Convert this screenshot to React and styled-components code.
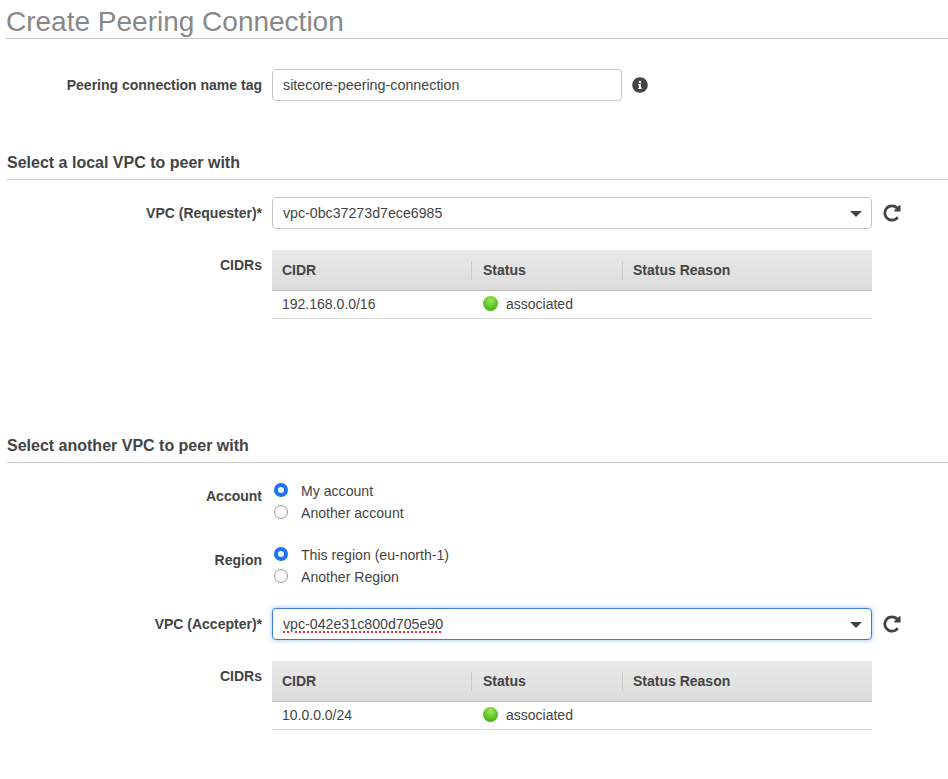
import React from 'react';
import styled, { createGlobalStyle } from 'styled-components';
import { FaInfoCircle } from 'react-icons/fa';

const GlobalStyle = createGlobalStyle`
  html, body {
    margin: 0;
    padding: 0;
    background: #fff;
    overflow: hidden;
  }
  body {
    font-family: "Liberation Sans", Arial, sans-serif;
    font-size: 14px;
    color: #444;
  }
`;

const Page = styled.div`
  width: 948px;
  height: 779px;
  padding-left: 6px;
  box-sizing: border-box;
  overflow: hidden;
`;

const Title = styled.h1`
  margin: 0;
  height: 38px;
  line-height: 44px;
  font-size: 28px;
  font-weight: 400;
  color: #888;
  border-bottom: 1px solid #c6c6c6;
`;

const Section = styled.section`
  margin-top: ${(p) => p.$top}px;
`;

const Heading = styled.h2`
  margin: 0 0 17px 1px;
  height: 27px;
  line-height: 21px;
  font-size: 16px;
  font-weight: 700;
  color: #444;
  border-bottom: 1px solid #c6c6c6;
`;

const Row = styled.div`
  display: flex;
  align-items: ${(p) => (p.$top ? 'flex-start' : 'center')};
  margin-top: ${(p) => p.$mt || 0}px;
`;

const Label = styled.label`
  flex: 0 0 256px;
  margin-right: 10px;
  text-align: right;
  font-weight: 700;
  font-size: 14px;
  color: #444;
  padding-top: ${(p) => p.$pt || 0}px;
`;

const TextInput = styled.input`
  width: 350px;
  height: 32px;
  box-sizing: border-box;
  padding: 0 10px;
  border: 1px solid #c6c6c6;
  border-radius: 4px;
  font: inherit;
  font-size: 14.3px;
  color: #444;
  outline: none;
`;

const SelectBox = styled.div`
  position: relative;
  width: 600px;
  height: 32px;
  box-sizing: border-box;
  padding: 0 10px;
  line-height: 30px;
  background: #fff;
  border: 1px solid ${(p) => (p.$focused ? '#3b7fd4' : '#c6c6c6')};
  border-radius: 4px;
  box-shadow: ${(p) => (p.$focused ? '0 0 5px rgba(82, 150, 236, 0.6)' : 'none')};
  font-size: 14.2px;
  color: #444;
`;

const Caret = styled.span`
  position: absolute;
  right: 9px;
  top: 13px;
  width: 0;
  height: 0;
  border-left: 6px solid transparent;
  border-right: 6px solid transparent;
  border-top: 6px solid #444;
`;

const Misspelled = styled.span`
  text-decoration: underline dotted #e8302a 1.5px;
  text-underline-offset: 2px;
`;

const IconSlot = styled.span`
  display: inline-flex;
  margin-left: ${(p) => p.$ml}px;
  font-size: ${(p) => p.$size}px;
  color: #444;
`;

const Table = styled.div`
  width: 600px;
  font-size: 14px;
`;

const TableHead = styled.div`
  display: grid;
  grid-template-columns: 199px 151px 250px;
  height: 41px;
  align-items: center;
  background: linear-gradient(#e9e9e9, #dcdcdc);
  border-bottom: 1px solid #bdbdbd;
  box-sizing: border-box;
`;

const HeadCell = styled.div`
  height: 19px;
  line-height: 19px;
  padding-left: ${(p) => p.$pad}px;
  font-weight: 700;
  color: #444;
  border-left: ${(p) => (p.$first ? 'none' : '1px solid #c9c9c9')};
`;

const TableRow = styled.div`
  display: grid;
  grid-template-columns: 200px 150px 250px;
  height: 28px;
  padding-bottom: 2px;
  align-items: center;
  border-bottom: 1px solid #d9d9d9;
  box-sizing: border-box;
`;

const Cell = styled.div`
  display: flex;
  align-items: center;
  padding-left: ${(p) => (p.$first ? 10 : 11)}px;
  color: #444;
`;

const Dot = styled.span`
  width: 15px;
  height: 15px;
  margin-right: 8px;
  border-radius: 50%;
  background: radial-gradient(circle at 50% 30%, #9be85a, #55c020 60%, #3f9a14);
`;

const RadioGroup = styled.div`
  display: flex;
  flex-direction: column;
`;

const RadioLine = styled.label`
  display: flex;
  align-items: center;
  height: 22px;
  font-size: 14.1px;
  color: #444;
`;

const Radio = styled.input.attrs({ type: 'radio' })`
  appearance: none;
  width: 14px;
  height: 14px;
  margin: 0 13px 2px 2px;
  box-sizing: border-box;
  border-radius: 50%;
  background: #fff;
  border: 1px solid #9a9a9a;
  &:checked {
    border: 4px solid #1a73f0;
  }
`;

const RefreshIcon = styled.svg`
  width: 20px;
  height: 20px;
  margin-left: 10px;
  fill: #444;
`;

const CidrTable = ({ cidr }) => (
  <Row $top $mt={21}>
    <Label $pt={7}>CIDRs</Label>
    <Table>
      <TableHead>
        <HeadCell $first $pad={10}>CIDR</HeadCell>
        <HeadCell $pad={11}>Status</HeadCell>
        <HeadCell $pad={10}>Status Reason</HeadCell>
      </TableHead>
      <TableRow>
        <Cell $first>{cidr}</Cell>
        <Cell>
          <Dot />
          associated
        </Cell>
        <Cell />
      </TableRow>
    </Table>
  </Row>
);

const Refresh = () => (
  <RefreshIcon viewBox="0 0 1792 1792">
    <path d="M1664 256v448q0 26-19 45t-45 19h-448q-42 0-59-40-17-39 14-69l138-138q-148-137-349-137-104 0-198.5 40.500t-163.500 109.500-109.500 163.500-40.500 198.500 40.500 198.500 109.500 163.500 163.500 109.500 198.500 40.500q119 0 225-52t179-147q7-10 23-12 15 0 25 9l137 138q9 8 9.500 20.500t-7.500 22.500q-109 132-264 204.500t-327 72.500q-156 0-298-61t-245-164-164-245-61-298 61-298 164-245 245-164 298-61q147 0 284.500 55.500t244.500 156.500l130-129q29-31 70-14 39 17 39 59z" />
  </RefreshIcon>
);

export default function App() {
  return (
    <Page>
      <GlobalStyle />
      <Title>Create Peering Connection</Title>

      <Row $mt={30}>
        <Label>Peering connection name tag</Label>
        <TextInput readOnly value="sitecore-peering-connection" />
        <IconSlot $ml={10} $size={16}>
          <FaInfoCircle />
        </IconSlot>
      </Row>

      <Section $top={51}>
        <Heading>Select a local VPC to peer with</Heading>
        <Row>
          <Label>VPC (Requester)*</Label>
          <SelectBox>
            vpc-0bc37273d7ece6985
            <Caret />
          </SelectBox>
          <Refresh />
        </Row>
        <CidrTable cidr="192.168.0.0/16" />
      </Section>

      <Section $top={116}>
        <Heading>Select another VPC to peer with</Heading>
        <Row $top>
          <Label $pt={8}>Account</Label>
          <RadioGroup>
            <RadioLine>
              <Radio name="account" defaultChecked />
              My account
            </RadioLine>
            <RadioLine>
              <Radio name="account" />
              Another account
            </RadioLine>
          </RadioGroup>
        </Row>
        <Row $top $mt={20}>
          <Label $pt={8}>Region</Label>
          <RadioGroup>
            <RadioLine>
              <Radio name="region" defaultChecked />
              This region (eu-north-1)
            </RadioLine>
            <RadioLine>
              <Radio name="region" />
              Another Region
            </RadioLine>
          </RadioGroup>
        </Row>
        <Row $mt={20}>
          <Label>VPC (Accepter)*</Label>
          <SelectBox $focused>
            <Misspelled>vpc-042e31c800d705e90</Misspelled>
            <Caret />
          </SelectBox>
          <Refresh />
        </Row>
        <CidrTable cidr="10.0.0.0/24" />
      </Section>
    </Page>
  );
}
